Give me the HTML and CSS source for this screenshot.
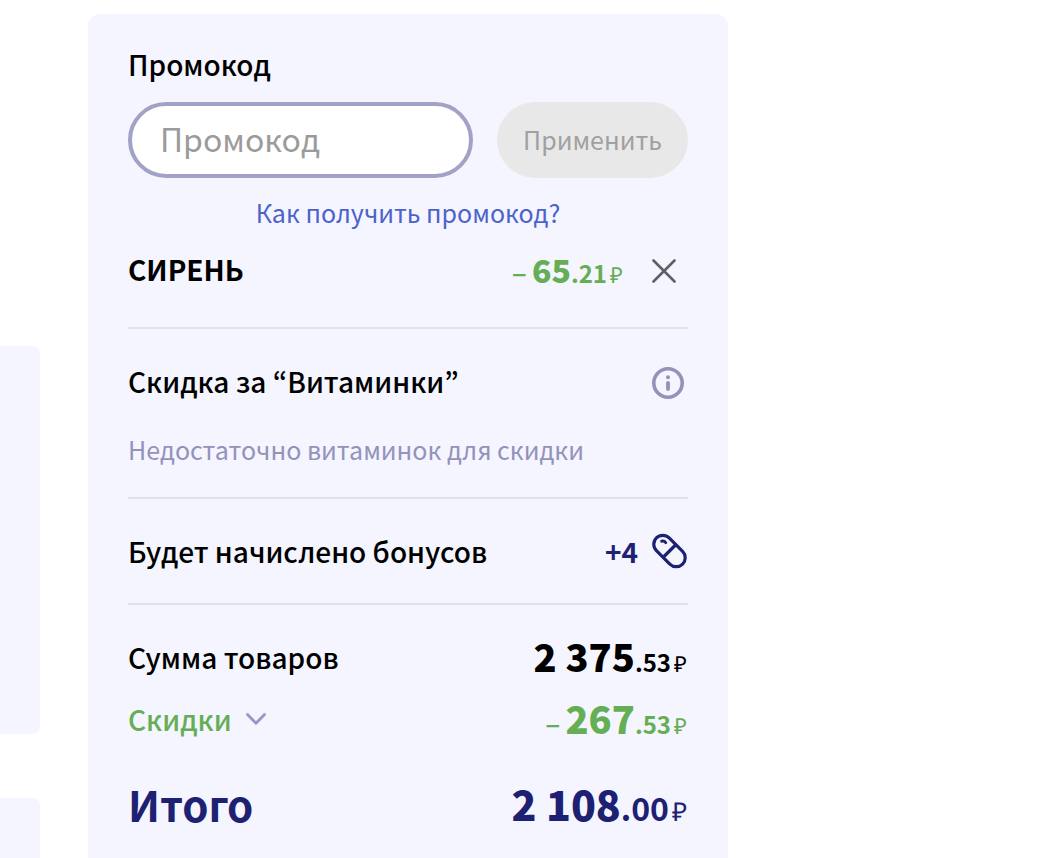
FILE: index.html
```html
<!DOCTYPE html>
<html lang="ru">
<head>
  <meta charset="UTF-8" />
  <title>Корзина</title>
  <meta name="viewport" content="width=device-width, initial-scale=1.0" />
  <link rel="stylesheet" href="styles.css">
</head>
<body>
<div class="page">
  <main class="goods">
    <div class="goods-card"></div>
    <div class="goods-card goods-card-last"></div>
  </main>
  <aside class="summary">
    <form class="promo">
      <label for="promo">Промокод</label>
      <div class="promo-row">
        <input type="text" id="promo" placeholder="Промокод" />
        <button type="button" class="apply-btn" disabled>Применить</button>
      </div>
      <a class="promo-help" href="#">Как получить промокод?</a>
    </form>
    <section class="block block-promo">
      <div class="row">
        <span class="promo-name">СИРЕНЬ</span>
        <span class="price price-sm green"><span class="minus">–</span><b>65</b><span class="cents">.21</span><span class="rub">₽</span></span>
        <button type="button" class="icon-btn" aria-label="Удалить промокод">
          <svg width="24" height="24" viewBox="0 0 24 24" fill="none" stroke="#606064" stroke-width="2.6" stroke-linecap="round"><path d="M1.5 1.5 22.5 22.5M22.5 1.5 1.5 22.5"/></svg>
        </button>
      </div>
    </section>
    <section class="block">
      <div class="row">
        <span>Скидка за “Витаминки”</span>
        <button type="button" class="icon-btn info-btn" aria-label="Подробнее">
          <svg width="32" height="32" viewBox="0 0 32 32" fill="none" stroke="#9392bb"><circle cx="16" cy="16" r="14.2" stroke-width="3.6"/><path d="M16 16v6" stroke-width="3.8" stroke-linecap="round"/><circle cx="16" cy="10.2" r="2" fill="#9392bb" stroke="none"/></svg>
        </button>
      </div>
      <p class="hint">Недостаточно витаминок для скидки</p>
    </section>
    <section class="block">
      <div class="row">
        <span>Будет начислено бонусов</span>
        <span class="bonus">+4
          <svg width="36" height="36" viewBox="0 0 36 36" fill="none" stroke="#1e2172" stroke-width="3.2" stroke-linecap="round"><rect x="-1" y="9" width="37" height="18" rx="9" transform="rotate(45 17.5 18)"/><path d="M11.5 24 23.5 12"/><path d="M9.600 8.200c1.800-.6 3.200.1 4.200 1.500" stroke-width="2.800"/></svg>
        </span>
      </div>
    </section>
    <section class="block totals">
      <div class="row">
        <span>Сумма товаров</span>
        <span class="price"><b>2 375</b><span class="cents">.53</span><span class="rub">₽</span></span>
      </div>
      <div class="row green">
        <button type="button" class="discounts-btn">Скидки
          <svg width="20" height="12" viewBox="0 0 20 12" fill="none" stroke="#9896c4" stroke-width="2.8" stroke-linecap="round" stroke-linejoin="round"><path d="M1.5 1.5 10 10.2 18.5 1.5"/></svg>
        </button>
        <span class="price"><span class="minus">–</span><b>267</b><span class="cents">.53</span><span class="rub">₽</span></span>
      </div>
      <div class="row total">
        <span>Итого</span>
        <span class="price price-lg"><b>2 108</b><span class="cents">.00</span><span class="rub">₽</span></span>
      </div>
    </section>
  </aside>
</div>
</body>
</html>
```
FILE: styles.css
```css
* {
  box-sizing: border-box;
}
body {
  margin: 0;
  background: #fff;
  color: #000;
  font-family: "Noto Sans CJK KR", "Open Sans", sans-serif;
  font-size: 28px;
  font-weight: 500;
  line-height: 40px;
}
button, input {
  font-family: inherit;
}
.page {
  display: grid;
  grid-template-columns: 40px minmax(0, 640px);
  column-gap: 48px;
  min-height: 100vh;
}
.goods {
  display: flex;
  flex-direction: column;
  gap: 64px;
  padding-top: 346px;
}
.goods-card {
  min-height: 388px;
  background: #f4f5fe;
  border-radius: 0 8px 8px 0;
}
.goods-card-last {
  flex: 1;
  min-height: 0;
  border-radius: 0 8px 0 0;
}
.summary {
  margin-top: 14px;
  padding: 30px 40px 32px;
  background: #f4f5fe;
  border-radius: 12px 12px 0 0;
}
.promo {
  display: flex;
  flex-direction: column;
}
.promo label {
  margin-bottom: 18px;
}
.promo-row {
  display: flex;
  gap: 24px;
}
.promo-row input {
  flex: 1;
  min-width: 0;
  height: 76px;
  padding: 0 28px 4px;
  border: 4px solid #a2a2c6;
  border-radius: 38px;
  background: #fff;
  font-size: 32px;
}
.promo-row input::placeholder {
  color: #9b9b9b;
}
.apply-btn {
  height: 76px;
  padding: 0 26px 2px;
  border: none;
  border-radius: 38px;
  background: #e8e8e8;
  color: #a0a0a0;
  font-size: 25px;
}
.promo-help {
  align-self: center;
  margin: 18px 0 21px;
  color: #4d62cb;
  font-size: 25px;
  font-weight: 400;
  line-height: 32px;
  text-decoration: none;
}
.block {
  padding: 32px 0;
  border-bottom: 2px solid #e0e1e8;
}
.block-promo {
  padding: 0 0 38px;
}
.row {
  display: flex;
  align-items: center;
  justify-content: space-between;
  height: 40px;
}
.promo-name {
  flex: 1;
  font-weight: 700;
}
.icon-btn {
  display: flex;
  padding: 4px 0 0;
  border: none;
  background: none;
  cursor: pointer;
}
.block-promo .icon-btn {
  margin: 0 12px 0 28px;
}
.info-btn {
  margin-right: 4px;
}
.hint {
  margin: 32px 0 0;
  color: #9392bb;
  font-size: 25px;
  font-weight: 400;
  line-height: 32px;
}
.bonus {
  display: flex;
  align-items: center;
  gap: 14px;
  color: #1e2172;
  font-weight: 700;
}
.totals {
  border-bottom: none;
}
.green {
  color: #65ae55;
}
.discounts-btn {
  display: flex;
  align-items: center;
  gap: 14px;
  padding: 0;
  border: none;
  background: none;
  color: inherit;
  font-size: 28px;
  font-weight: 500;
  line-height: 40px;
  cursor: pointer;
}
.price {
  display: flex;
  align-items: baseline;
  padding: 4px 1px 0 0;
  font-size: 24px;
  font-weight: 700;
}
.price b {
  font-size: 38px;
}
.price .rub {
  margin-left: 3px;
  font-size: 22px;
  font-weight: 500;
}
.price .minus {
  margin-right: 5px;
  font-size: 28px;
  font-weight: 500;
}
.price-sm b {
  font-size: 32px;
}
.price-lg {
  font-size: 32px;
}
.price-lg b {
  font-size: 41px;
}
.price-lg .rub {
  font-size: 26px;
}
.totals .row + .row {
  margin-top: 22px;
}
.totals .row + .total {
  margin-top: 45px;
  color: #1e2172;
  font-size: 42px;
  font-weight: 700;
}
```
